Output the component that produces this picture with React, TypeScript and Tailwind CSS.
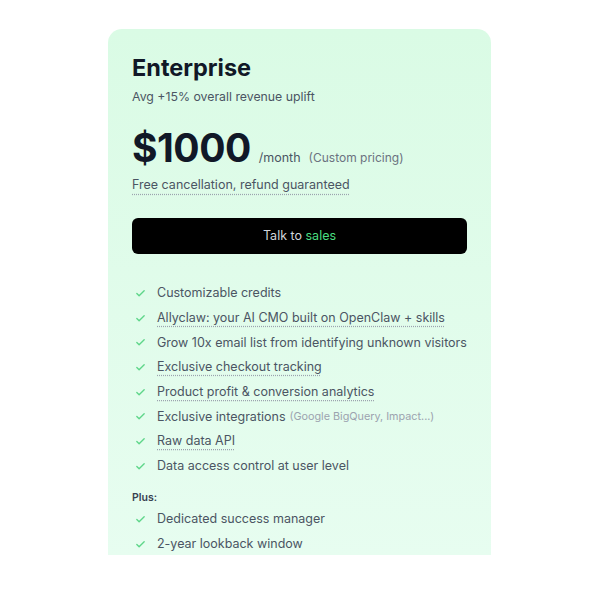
import { Check } from "lucide-react";

type Feature = {
  label: string;
  dotted?: boolean;
  note?: string;
};

const features: Feature[] = [
  { label: "Customizable credits" },
  { label: "Allyclaw: your AI CMO built on OpenClaw + skills", dotted: true },
  { label: "Grow 10x email list from identifying unknown visitors" },
  { label: "Exclusive checkout tracking", dotted: true },
  { label: "Product profit & conversion analytics", dotted: true },
  { label: "Exclusive integrations", note: "(Google BigQuery, Impact...)" },
  { label: "Raw data API", dotted: true },
  { label: "Data access control at user level" },
];

const extras: Feature[] = [
  { label: "Dedicated success manager" },
  { label: "2-year lookback window" },
];

const dotted =
  "underline decoration-dotted decoration-[#9ca3af] underline-offset-[4px]";

function FeatureRow({ item }: { item: Feature }) {
  return (
    <li className="flex items-center h-[24.7px]">
      <Check className="w-[11px] h-[11px] text-[#5fd68a] ml-[3px] mr-[11px]" strokeWidth={3} />
      <span className={item.dotted ? dotted : ""}>{item.label}</span>
      {item.note && (
        <span className="ml-1 text-[10.8px] text-[#9ca3af]">{item.note}</span>
      )}
    </li>
  );
}

export default function App() {
  return (
    <div className="w-[600px] h-[600px] bg-white pt-[29px] pl-[108px]">
      <div
        className="w-[383px] h-[526px] rounded-t-[14px] bg-gradient-to-b from-[#dafbe5] to-[#e7fdf0] px-6 pt-[24px] overflow-hidden"
        style={{ fontFamily: "Inter, 'Noto Sans', sans-serif" }}
      >
        <div className="text-[23.5px] leading-[30px] font-bold text-[#111827]">
          Enterprise
        </div>
        <p className="text-[12.3px] text-[#4b5563] mt-[5px]">
          Avg +15% overall revenue uplift
        </p>

        <div className="flex items-baseline mt-[18px]">
          <span className="text-[39px] leading-[48px] font-bold text-[#111827] tracking-[-0.5px]">
            $1000
          </span>
          <span className="ml-2 text-[12.5px] text-[#4b5563]">/month</span>
          <span className="ml-2 text-[12px] text-[#6b7280]">(Custom pricing)</span>
        </div>
        <p className={`text-[12.5px] text-[#4b5563] mt-[4px] ${dotted}`}>
          Free cancellation, refund guaranteed
        </p>

        <button className="mt-[23px] w-full h-[36px] rounded-[6px] bg-black text-[12.5px]">
          <span className="text-[#d1d5db]">Talk to </span>
          <span className="text-[#4ade80]">sales</span>
        </button>

        <ul className="mt-[27px] text-[12.5px] text-[#4b5563]">
          {features.map((f) => (
            <FeatureRow key={f.label} item={f} />
          ))}
        </ul>

        <div className="mt-[11px] text-[10.5px] font-semibold text-[#374151]">Plus:</div>
        <ul className="mt-[2px] text-[12.5px] text-[#4b5563]">
          {extras.map((f) => (
            <FeatureRow key={f.label} item={f} />
          ))}
        </ul>
      </div>
    </div>
  );
}
